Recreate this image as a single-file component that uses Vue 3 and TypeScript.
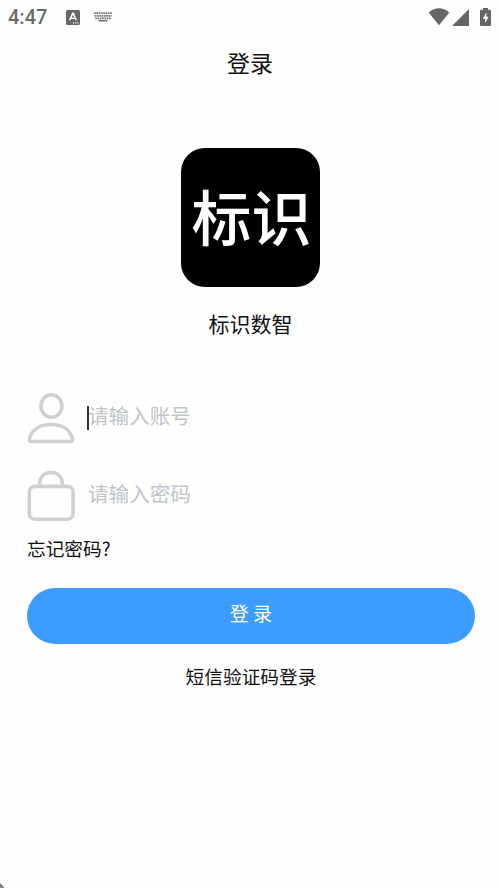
<script setup lang="ts">
import { ref } from 'vue'

const account = ref<string>('')
const password = ref<string>('')
</script>

<template>
  <main class="page">
    <header class="status">
      <span class="clock">4:47</span>
      <svg class="ime" viewBox="0 0 14 15">
        <rect width="14" height="15" rx="1.6" fill="#666" />
        <path d="M3.7 10.3 6.7 3.3h.6l3 7M4.9 8.2h4.2" fill="none" stroke="#fff" stroke-width="1.6" />
        <path d="M7 12.8h1.2M9.2 12.8h1.2M11.4 12.8h1.2" stroke="#fff" stroke-width="1.2" />
      </svg>
      <svg class="keyboard" viewBox="0 0 18 10">
        <path d="M0 1.2h18M.6 3.8h17M1.2 6.4h16" stroke="#777" stroke-width="1.7" stroke-dasharray="1.7 .6" />
        <path d="M4.5 8.7h9" stroke="#777" stroke-width="1.6" />
      </svg>
      <span class="spacer"></span>
      <svg class="wifi" viewBox="0 0 22 18">
        <path d="M.7 4.5Q11-3.8 21.3 4.5L11 17.3Z" fill="#666" />
      </svg>
      <svg class="signal" viewBox="0 0 17 17"><path d="M17 0v17H0Z" fill="#666" /></svg>
      <svg class="battery" viewBox="0 0 11 18">
        <path d="M3 0h5v1.7h2q1 0 1 1V17q0 1-1 1H1q-1 0-1-1V2.7q0-1 1-1h2Z" fill="#666" />
        <path d="M6.4 4.2 2.7 10.7h2.4v4.4l3.5-6.3H6.4Z" fill="#fff" />
      </svg>
    </header>

    <h1 class="title">登录</h1>
    <div class="logo"><span>标识</span></div>
    <p class="name">标识数智</p>

    <form class="form" @submit.prevent>
      <label class="field">
        <svg class="icon" viewBox="0 0 48 52" fill="none" stroke="#d0d0d0" stroke-width="3.6">
          <ellipse cx="24.4" cy="14" rx="10.5" ry="11.2" />
          <path d="M4.5 49.500Q2 49.500 2.500 46.500C5 37 13.500 32.500 24 32.500S43 37 45.500 46.500Q46 49.500 43.500 49.500Z" />
        </svg>
        <span class="entry">
          <input v-model="account" type="text" placeholder="请输入账号" />
          <i class="caret"></i>
        </span>
      </label>
      <label class="field">
        <svg class="icon" viewBox="0 0 48 52" fill="none" stroke="#d0d0d0" stroke-width="3.6">
          <rect x="2.3" y="16.4" width="43.8" height="32.8" rx="5.5" />
          <path d="M12.7 16V14C12.7 6.500 17.500 2.500 24 2.500S35.300 6.500 35.300 14v2" />
        </svg>
        <span class="entry">
          <input v-model="password" type="password" placeholder="请输入密码" />
        </span>
      </label>
      <a class="forgot">忘记密码?</a>
      <button class="submit" type="submit">登 录</button>
      <a class="sms">短信验证码登录</a>
    </form>

    <svg class="corner" viewBox="0 0 4 5"><path d="M0 1 3.5 5M0 4h1.5" stroke="#555" stroke-width="1.3" /></svg>
  </main>
</template>

<style>
body {
  background: #fefefe;
}
</style>

<style scoped>
.page {
  position: relative;
  display: flex;
  flex-direction: column;
  box-sizing: border-box;
  height: 888px;
  overflow: hidden;
  background: #fefefe;
  color: #111;
  font-family: "Noto Sans CJK SC", sans-serif;
}
.status {
  display: flex;
  align-items: center;
  height: 34px;
  padding: 0 9px 0 8px;
}
.clock {
  width: 58px;
  color: #6a6a6a;
  font: 500 20px/34px Roboto, sans-serif;
}
.ime {
  width: 14px;
  height: 15px;
}
.keyboard {
  width: 18px;
  height: 10px;
  margin-left: 14px;
}
.spacer {
  flex: 1;
}
.wifi {
  width: 22px;
  height: 18px;
}
.signal {
  width: 17px;
  height: 17px;
  margin-left: 2px;
}
.battery {
  width: 11px;
  height: 18px;
  margin-left: 11px;
}
.title {
  margin: 11px 0 0;
  font-size: 23px;
  font-weight: 400;
  line-height: 34px;
  text-align: center;
}
.logo {
  display: flex;
  align-items: center;
  justify-content: center;
  box-sizing: border-box;
  width: 139px;
  height: 139px;
  margin: 69px 0 0 181.4px;
  padding: 0 0 6px 1px;
  border-radius: 24px;
  background: #000;
  color: #fff;
  font-size: 60px;
  font-weight: 500;
  line-height: 88px;
}
.name {
  margin: 21px 0 0;
  padding-left: 1px;
  font-size: 21px;
  line-height: 30px;
  text-align: center;
}
.form {
  display: flex;
  flex-direction: column;
  padding: 54px 25px 0 27px;
}
.field {
  display: flex;
  height: 52px;
  margin-bottom: 26px;
}
.icon {
  width: 48px;
  height: 52px;
}
.entry {
  position: relative;
  flex: 1;
  margin-left: 12px;
}
.entry input {
  display: block;
  width: 100%;
  height: 46px;
  padding: 0 0 0 1px;
  border: 0;
  outline: 0;
  background: transparent;
  color: #111;
  font-family: inherit;
  font-size: 20.6px;
}
.entry input::placeholder {
  color: #c0c4cc;
  opacity: 1;
}
.caret {
  position: absolute;
  top: 14px;
  left: 0;
  width: 2px;
  height: 24px;
  background: #333;
}
.forgot {
  margin-top: -14px;
  font-size: 18.7px;
  line-height: 28px;
}
.submit {
  height: 56px;
  margin-top: 26px;
  padding: 0 0 7px;
  border: 0;
  border-radius: 28px;
  background: #3c9cff;
  color: #fff;
  font-family: inherit;
  font-size: 19px;
}
.sms {
  margin-top: 18px;
  font-size: 18.7px;
  line-height: 28px;
  text-align: center;
}
.corner {
  position: absolute;
  bottom: 0;
  left: 0;
  width: 4px;
  height: 5px;
}
</style>
